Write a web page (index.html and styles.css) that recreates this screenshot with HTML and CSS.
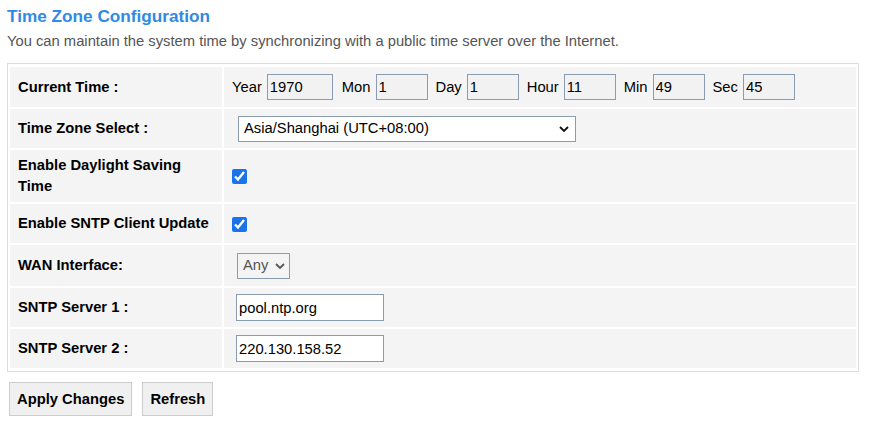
FILE: index.html
```html
<!DOCTYPE html>
<html>
<head>
<meta charset="utf-8">
<link rel="stylesheet" href="styles.css">
</head>
<body>
<div class="page">
  <h1 class="title">Time Zone Configuration</h1>
  <p class="intro">You can maintain the system time by synchronizing with a public time server over the Internet.</p>
  <table class="cfg">
    <tr class="r1">
      <th>Current Time :</th>
      <td>
        <div class="time">
          <span class="lbl">Year</span><input class="tin year" value="1970" readonly>
          <span class="lbl">Mon</span><input class="tin" value="1" readonly>
          <span class="lbl">Day</span><input class="tin" value="1" readonly>
          <span class="lbl">Hour</span><input class="tin" value="11" readonly>
          <span class="lbl">Min</span><input class="tin" value="49" readonly>
          <span class="lbl">Sec</span><input class="tin" value="45" readonly>
        </div>
      </td>
    </tr>
    <tr class="r2">
      <th>Time Zone Select :</th>
      <td>
        <div class="sel tz"><span>Asia/Shanghai (UTC+08:00)</span><svg class="chev" viewBox="0 0 10 6" width="10" height="6"><path d="M1 1 L5 5 L9 1" fill="none" stroke="#111" stroke-width="1.8"/></svg></div>
      </td>
    </tr>
    <tr class="r3">
      <th>Enable Daylight Saving<br>Time</th>
      <td><input type="checkbox" class="cb" checked></td>
    </tr>
    <tr class="r4">
      <th>Enable SNTP Client Update</th>
      <td><input type="checkbox" class="cb" checked></td>
    </tr>
    <tr class="r5">
      <th>WAN Interface:</th>
      <td>
        <div class="sel wan"><span>Any</span><svg class="chev" viewBox="0 0 10 6" width="10" height="6"><path d="M1 1 L5 5 L9 1" fill="none" stroke="#555" stroke-width="1.8"/></svg></div>
      </td>
    </tr>
    <tr class="r6">
      <th>SNTP Server 1 :</th>
      <td><input class="srv" value="pool.ntp.org"></td>
    </tr>
    <tr class="r7">
      <th>SNTP Server 2 :</th>
      <td><input class="srv" value="220.130.158.52"></td>
    </tr>
  </table>
  <div class="btns">
    <button class="btn">Apply Changes</button>
    <button class="btn">Refresh</button>
  </div>
</div>
</body>
</html>
```
FILE: styles.css
```css
html, body {
  margin: 0;
  padding: 0;
  background: #fff;
}
body {
  font-family: "Liberation Sans", Arial, sans-serif;
  font-size: 14.75px;
  color: #000;
  overflow: hidden;
}
.page {
  padding: 6px 7px 0 7px;
}
.title {
  margin: 0;
  font-size: 17.2px;
  line-height: 20px;
  font-weight: bold;
  color: #2f8ae5;
}
.intro {
  margin: 4px 0 0 0;
  font-size: 14.75px;
  line-height: 22px;
  color: #555;
}
.cfg {
  margin-top: 11px;
  width: 852px;
  border: 1px solid #ddd;
  border-collapse: separate;
  border-spacing: 2px;
  padding: 1px 0;
}
.cfg th, .cfg td {
  background: #f4f4f4;
  padding: 6px 8px;
  line-height: 21px;
  vertical-align: middle;
  text-align: left;
}
.cfg th {
  width: 196px;
  font-weight: bold;
  font-size: 14.75px;
}
.r1 th, .r1 td { height: 28px; }
.r2 th, .r2 td { height: 27px; }
.r3 th, .r3 td { padding-top: 5px; padding-bottom: 5px; }
.r4 th, .r4 td { height: 27px; }
.r5 th, .r5 td { height: 29px; }
.r6 th, .r6 td, .r7 th, .r7 td { height: 27px; }

.time {
  display: flex;
  align-items: center;
}
.lbl {
  margin-right: 5px;
}
.tin {
  box-sizing: border-box;
  width: 52px;
  height: 26px;
  margin: 0 8px 0 0;
  padding: 0 2px;
  border: 1px solid #8a9db0;
  background: #f2f2f2;
  font-family: "Liberation Sans", Arial, sans-serif;
  font-size: 14.75px;
  color: #000;
  outline: none;
}
.tin.year {
  width: 66px;
  margin-right: 9px;
}
.sel {
  box-sizing: border-box;
  display: flex;
  align-items: center;
  justify-content: space-between;
  border: 1px solid #8a9db0;
  height: 26px;
  padding: 0 6px 0 5px;
}
.tz {
  width: 338px;
  background: #fff;
  margin-left: 6px;
}
.wan {
  width: 53px;
  margin-left: 5px;
  background: #f4f4f4;
  color: #555;
  padding: 0 4px 0 5px;
}
.chev {
  display: block;
}
.cb {
  width: 15px;
  height: 15px;
  margin: 0;
  vertical-align: middle;
  accent-color: #1a73e8;
}
.srv {
  box-sizing: border-box;
  width: 148px;
  height: 27px;
  margin-left: 4px;
  padding: 0 2px;
  border: 1px solid #8a9db0;
  background: #fff;
  font-family: "Liberation Sans", Arial, sans-serif;
  font-size: 14.75px;
  color: #000;
  outline: none;
}
.btns {
  display: flex;
  gap: 10px;
  margin-top: 10px;
  padding-left: 2px;
}
.btn {
  font-family: "Liberation Sans", Arial, sans-serif;
  font-size: 14.75px;
  font-weight: bold;
  color: #000;
  background: #f0f0f0;
  border: 1px solid #ccc;
  padding: 0 7px;
  height: 34px;
}
```
